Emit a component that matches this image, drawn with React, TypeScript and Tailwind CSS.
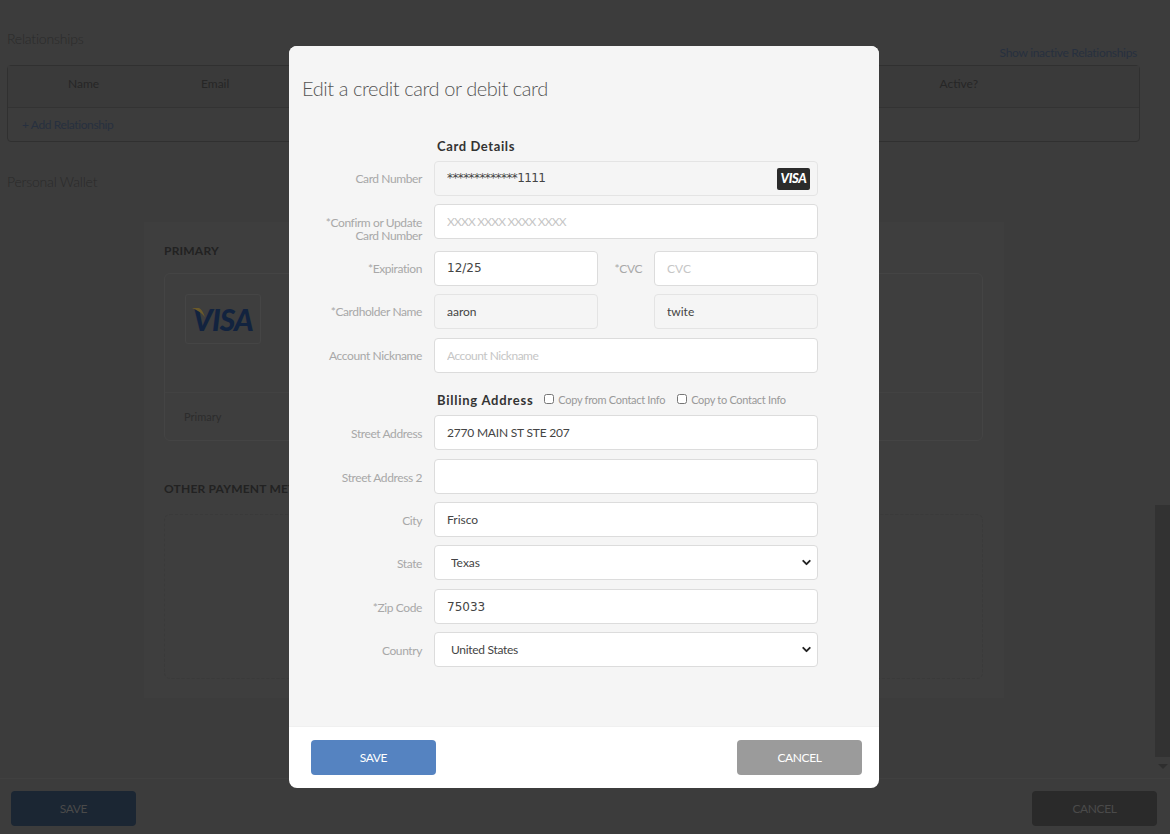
import { ChevronDown } from "lucide-react";
import type { ReactNode } from "react";

const inputBase =
	"h-[35px] w-full rounded-[4px] border px-3 text-[12px] text-[#444] outline-none placeholder:text-[#c6c6c6]";

function Field({
	value,
	placeholder,
	locked,
	className,
}: {
	value?: string;
	placeholder?: string;
	locked?: boolean;
	className?: string;
}) {
	return (
		<input
			readOnly
			value={value ?? ""}
			placeholder={placeholder}
			className={`${inputBase} ${locked ? "border-[#e4e4e4] bg-[#f5f5f5]" : "border-[#dcdcdc] bg-white"} ${className ?? ""}`}
		/>
	);
}

function Row({
	label,
	twoLine,
	className,
	children,
}: {
	label: ReactNode;
	twoLine?: boolean;
	className?: string;
	children: ReactNode;
}) {
	return (
		<div className={`flex ${twoLine ? "items-start" : "items-center"} ${className ?? ""}`}>
			<label
				className={`w-[133px] pr-3 text-right text-[12px] leading-[13px] tracking-[-0.4px] text-[#a8a8a8] ${twoLine ? "pt-[12px]" : "pt-[1px]"}`}
			>
				{label}
			</label>
			<div className="w-[384px]">{children}</div>
		</div>
	);
}

function SelectField({ value, className }: { value: string; className?: string }) {
	return (
		<div className="relative">
			<select
				defaultValue={value}
				className={`${inputBase} appearance-none border-[#dcdcdc] bg-white pl-[16px] ${className ?? ""}`}
			>
				<option>{value}</option>
			</select>
			<ChevronDown
				className="pointer-events-none absolute top-[11px] right-[5px] size-[13px] text-[#222]"
				strokeWidth={3.5}
			/>
		</div>
	);
}

function VisaBadge() {
	return (
		<span className="absolute top-[7px] right-[8px] flex h-[22px] w-[33px] items-center justify-center rounded-[2px] bg-[#2b2b2b] text-[13px] font-black italic tracking-[-0.4px] text-white">
			VISA
		</span>
	);
}

function CheckLabel({ text }: { text: string }) {
	return (
		<label className="flex items-center gap-[4px] text-[11px] tracking-[-0.3px] text-[#999]">
			<input type="checkbox" className="mb-[3px] h-[10px] w-[10px]" />
			{text}
		</label>
	);
}

function VisaLogo() {
	return (
		<span className="relative text-[30px] leading-none font-black italic tracking-[-0.8px] text-[#12233f]">
			VISA
			<svg className="absolute top-[4px] left-[-1px]" width="14" height="9" viewBox="0 0 14 9">
				<path d="M0 0 H7 Q10 1 13 9 Q8 3 0 0 Z" fill="#6b5a2a" />
			</svg>
		</span>
	);
}

function Background() {
	return (
		<div className="relative flex h-[834px] flex-col overflow-hidden bg-[#3c3c3c] font-['Lato',sans-serif] text-[#222]">
			<div className="flex-1 px-[7px] pt-[28px]">
				<div className="flex items-start justify-between pr-[26px]">
					<div className="text-[14px] font-light tracking-[-0.2px] text-[#2a2a2a]">Relationships</div>
					<a className="mt-[16px] text-[12px] tracking-[-0.3px] text-[#27303f]">Show inactive Relationships</a>
				</div>
				<div className="mt-[3px] mr-[23px] rounded-[4px] border border-[#303030]">
					<div className="flex h-[42px] items-center border-b border-[#333] bg-[#3a3a3a] pb-[6px] text-[12px] text-[#262626]">
						<span className="ml-[60px] w-[133px]">Name</span>
						<span>Email</span>
						<span className="mr-[161px] ml-auto">Active?</span>
					</div>
					<div className="flex h-[33px] items-center pl-[14px] text-[12px] tracking-[-0.4px] text-[#27303f]">
						+ Add Relationship
					</div>
				</div>
				<div className="mt-[29px] text-[14px] font-light tracking-[-0.2px] text-[#2a2a2a]">Personal Wallet</div>
				<div className="mt-[30px] ml-[137px] h-[476px] w-[860px] bg-[#3e3e3e] px-[20px] pt-[20px]">
					<div className="text-[12px] font-bold tracking-[0.2px] text-[#222]">PRIMARY</div>
					<div className="mt-[13px] h-[168px] w-[819px] rounded-[6px] border border-[#444]">
						<div className="h-[119px] border-b border-[#424242] pt-[20px] pl-[20px]">
							<div className="flex h-[50px] w-[76px] items-center justify-center rounded-[3px] border border-[#454545]">
								<VisaLogo />
							</div>
						</div>
						<div className="pt-[16px] pl-[19px] text-[11px] text-[#2c2c2c]">Primary</div>
					</div>
					<div className="mt-[39px] text-[12px] font-bold tracking-[0.2px] whitespace-nowrap text-[#222]">
						OTHER PAYMENT METHODS
					</div>
					<div className="mt-[16px] h-[165px] w-[819px] rounded-[6px] border border-dashed border-[#3a3a3a]" />
				</div>
			</div>
			<div className="flex h-[56px] shrink-0 items-start justify-between border-t border-[#404040] px-[11px] pt-[12px] text-[12px] tracking-[-0.4px]">
				<button className="h-[35px] w-[125px] rounded-[4px] bg-[#1b2633] text-[#4a4a4a]">SAVE</button>
				<button className="mr-[2px] h-[35px] w-[125px] rounded-[4px] bg-[#2a2a2a] text-[#4a4a4a]">CANCEL</button>
			</div>
			<div className="absolute top-[505px] right-0 h-[252px] w-[15px] bg-[#323232]" />
			<div className="absolute top-[764px] right-[2px] h-0 w-0 border-x-[5px] border-t-[5px] border-x-transparent border-t-[#2e2e2e]" />
		</div>
	);
}

export default function App() {
	return (
		<div className="relative h-[834px] w-[1170px] overflow-hidden font-['Lato',sans-serif]">
			<Background />
			{/* modal */}
			<div className="absolute top-[46px] left-[289px] flex h-[742px] w-[590px] flex-col overflow-hidden rounded-[8px] bg-white">
				<div className="h-[681px] border-b border-[#f0f0f0] bg-[#f5f5f5]">
					<h2 className="pt-[28px] pl-[13px] text-[20px] leading-[28px] font-light tracking-[-0.42px] text-[#555]">
						Edit a credit card or debit card
					</h2>
					<div className="ml-[12px] w-[517px]">
						<div className="mt-[35px] ml-[136px] text-[13px] font-bold tracking-[0.6px] text-[#333]">Card Details</div>
						<div className="mt-[4px]">
							<Row label="Card Number">
								<div className="relative">
									<Field value="*************1111" locked className="font-['DejaVu_Sans'] tracking-[-0.6px]" />
									<VisaBadge />
								</div>
							</Row>
						</div>
						<Row
							twoLine
							label={
								<>
									*Confirm or Update
									<br />
									Card Number
								</>
							}
							className="mt-[8px]"
						>
							<Field placeholder="XXXX XXXX XXXX XXXX" className="tracking-[-0.8px]" />
						</Row>
						<Row label="*Expiration" className="mt-[9px]">
							<div className="flex items-center">
								<div className="w-[164px]">
									<Field value="12/25" className="font-['DejaVu_Sans']" />
								</div>
								<span className="w-[56px] pt-[2px] pr-3 pl-[2px] text-right text-[12px] tracking-[-0.4px] whitespace-nowrap text-[#a8a8a8]">
									*CVC
								</span>
								<div className="w-[164px]">
									<Field placeholder="CVC" />
								</div>
							</div>
						</Row>
						<Row label="*Cardholder Name" className="mt-[8px]">
							<div className="flex justify-between">
								<div className="w-[164px]">
									<Field value="aaron" locked />
								</div>
								<div className="w-[164px]">
									<Field value="twite" locked />
								</div>
							</div>
						</Row>
						<Row label="Account Nickname" className="mt-[9px]">
							<Field placeholder="Account Nickname" className="tracking-[-0.5px]" />
						</Row>
						<div className="mt-[18px] ml-[136px] flex items-center">
							<span className="text-[13px] font-bold tracking-[0.75px] text-[#333]">Billing Address</span>
							<div className="ml-[11px] flex gap-[12px]">
								<CheckLabel text="Copy from Contact Info" />
								<CheckLabel text="Copy to Contact Info" />
							</div>
						</div>
						<Row label="Street Address" className="mt-[5px]">
							<Field value="2770 MAIN ST STE 207" className="tracking-[-0.2px]" />
						</Row>
						<Row label="Street Address 2" className="mt-[9px]">
							<Field />
						</Row>
						<Row label="City" className="mt-[8px]">
							<Field value="Frisco" />
						</Row>
						<Row label="State" className="mt-[8px]">
							<SelectField value="Texas" />
						</Row>
						<Row label="*Zip Code" className="mt-[9px]">
							<Field value="75033" className="font-['DejaVu_Sans']" />
						</Row>
						<Row label="Country" className="mt-[8px]">
							<SelectField value="United States" className="tracking-[-0.3px]" />
						</Row>
					</div>
				</div>
				<div className="flex flex-1 items-start justify-between px-[22px] pt-[13px] pr-[17px] text-[12px] tracking-[-0.4px] text-white">
					<button className="h-[35px] w-[125px] rounded-[4px] bg-[#5583c1]">SAVE</button>
					<button className="h-[35px] w-[125px] rounded-[4px] bg-[#9b9b9b]">CANCEL</button>
				</div>
			</div>
		</div>
	);
}
